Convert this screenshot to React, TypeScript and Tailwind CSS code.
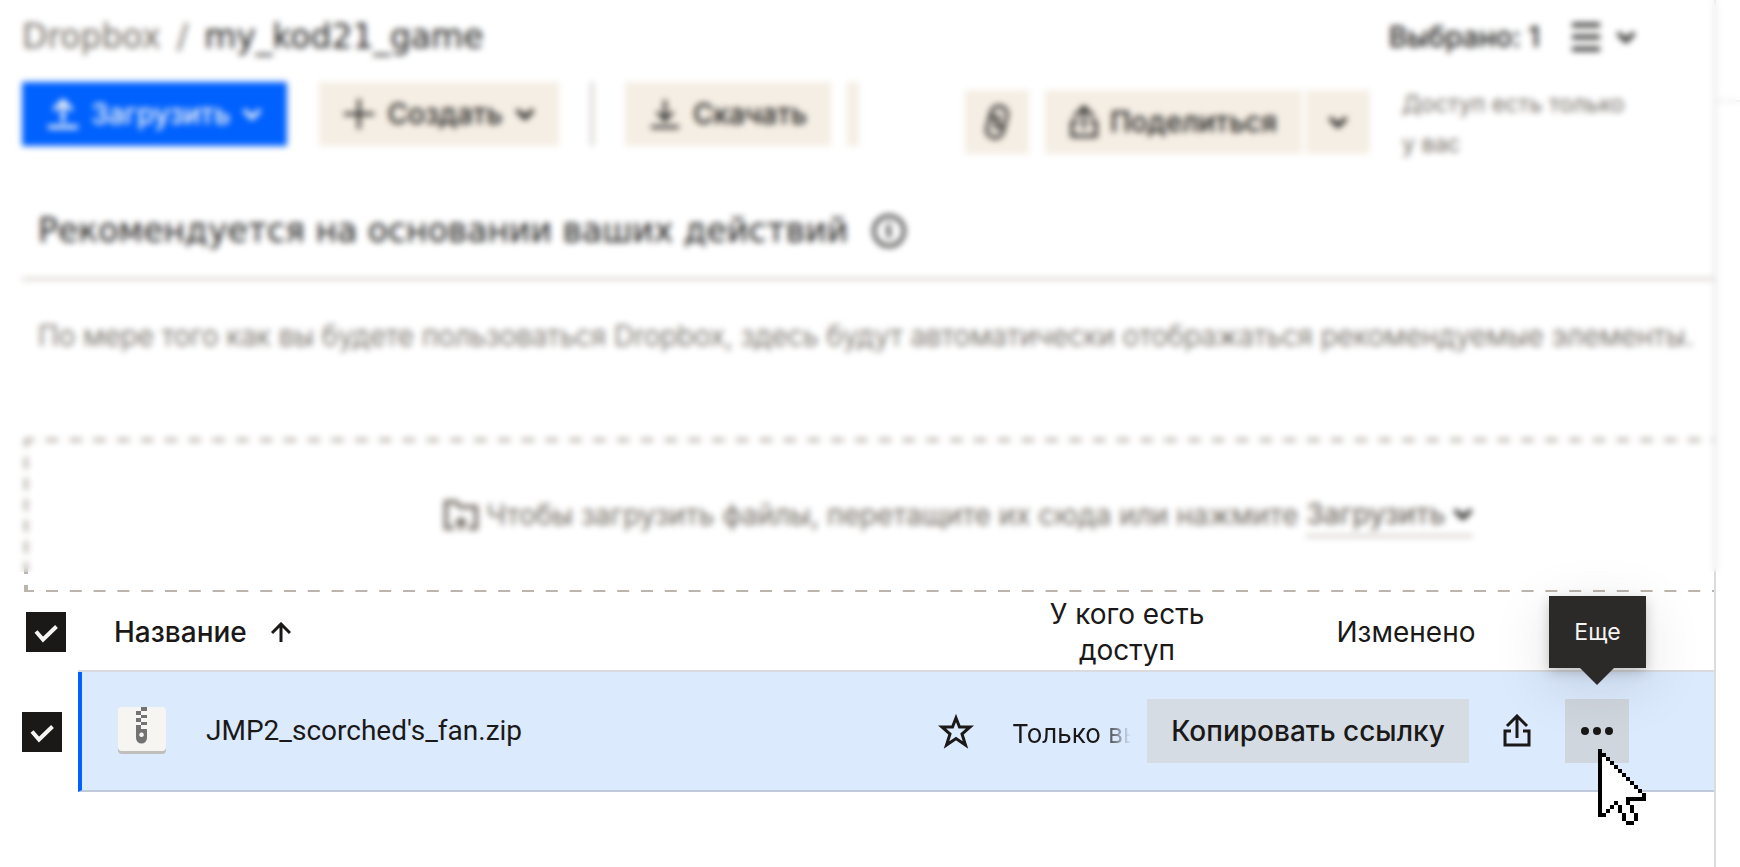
'use client';

import React from 'react';

type IconProps = { className?: string };

const ChevronIcon: React.FC<IconProps> = ({ className }) => (
  <svg viewBox="0 0 20 12" fill="none" stroke="currentColor" strokeWidth="4" className={className}>
    <path d="M2 2l8 8 8-8" />
  </svg>
);

const ShareIcon: React.FC<IconProps> = ({ className }) => (
  <svg viewBox="0 0 28 34" fill="none" stroke="currentColor" strokeWidth="3" className={className}>
    <path d="M14 24V3M4 12L14 2l10 10M8 17H2v14h24V17h-6" />
  </svg>
);

const CheckBox: React.FC<{ label: string }> = ({ label }) => (
  <label className="relative block size-10 bg-[#1a1918]">
    <input type="checkbox" defaultChecked aria-label={label} className="peer block size-10 appearance-none" />
    <svg viewBox="0 0 40 40" fill="none" stroke="#f7f5f2" strokeWidth="4" className="pointer-events-none absolute inset-0 hidden peer-checked:block">
      <path d="M10 19.5l7 8L30.500 14.500" />
    </svg>
  </label>
);

const ZipIcon: React.FC = () => (
  <svg viewBox="0 0 48 48" className="h-12 w-12">
    <rect y="3" width="48" height="44" rx="4" fill="#bfbfbc" />
    <rect width="48" height="44" rx="4" fill="#f7f5f2" />
    <g fill="#737373">
      <path d="M23 0h6v4h-6zM18 4h5v4h-5zM23 8h6v3h-6zM18 11h5v4h-5zM23 15h6v3h-6zM18 18h5v4h-5z" />
      <path fillRule="evenodd" d="M18 22h11v9a5 5 0 0 1-11 0zM23.500 25.500a2.300 2.300 0 1 0 .1 0z" />
    </g>
  </svg>
);

const Cursor: React.FC = () => (
  <svg viewBox="0 0 12 19" shapeRendering="crispEdges" className="h-[76px] w-12">
    <path fill="#fff" d="M1 1h1v1h1v1h1v1h1v1h1v1h1v1h1v1h1v1h1v1h1v2H8v2h1v4H7v-2H6v-2H5v-2H4v1H3v1H2v1H1z" />
    <path d="M0 0h1v17H0zM1 1h1v1H1zM2 2h1v1H2zM3 3h1v1H3zM4 4h1v1H4zM5 5h1v1H5zM6 6h1v1H6zM7 7h1v1H7zM8 8h1v1H8zM9 9h1v1H9zM10 10h1v1h-1zM11 11h1v2h-5v-1h4zM1 16h1v1H1zM2 15h1v1H2zM3 14h1v1H3zM4 13h1v1H4zM5 14h1v2H5zM6 16h1v2H6zM7 18h2v1H7zM7 13h1v1H7zM8 14h1v2H8zM9 16h1v2H9z" />
  </svg>
);

const App: React.FC = () => {
  return (
    <div className="relative flex min-h-screen bg-white font-[Inter,sans-serif] text-[#1a1918]">
      <main className="min-w-0 flex-1 border-r-2 border-[#dcdcdc]">
        {/* Breadcrumbs and selection */}
        <header className="flex h-[82px] items-start justify-between pt-4 pr-[78px] pl-[22px]">
          <nav className="flex gap-4 font-['DejaVu_Sans',sans-serif] text-[33px] leading-[42px]">
            <a href="#" className="text-[#736c64]">Dropbox</a>
            <span className="text-[#736c64]">/</span>
            <a href="#">my_kod21_game</a>
          </nav>
          <div className="flex items-center gap-8 text-[28px] leading-[42px] font-medium">
            <span>Выбрано: 1</span>
            <button aria-label="Вид" className="flex items-center gap-4">
              <svg viewBox="0 0 28 30" fill="none" stroke="currentColor" strokeWidth="4" className="h-[30px] w-7">
                <path d="M0 3h28M0 15h28M0 27h28" />
              </svg>
              <ChevronIcon className="h-3 w-5" />
            </button>
          </div>
        </header>

        {/* Toolbar */}
        <div className="flex items-start justify-between pr-[78px] pl-[22px] text-[28px] font-medium">
          <div className="flex h-16">
            <button className="flex w-[265px] items-center justify-center gap-3 bg-[#0061fe] text-[#f7f5f2]">
              <svg viewBox="0 0 32 32" fill="none" stroke="currentColor" strokeWidth="4" className="size-8">
                <path d="M16 24V4M7 12l9-9 9 9M1 29h30" />
              </svg>
              Загрузить
              <ChevronIcon className="h-3 w-5" />
            </button>
            <button className="ml-8 flex w-[240px] items-center justify-center gap-3 bg-[#f5eee4]">
              <svg viewBox="0 0 32 32" fill="none" stroke="currentColor" strokeWidth="3" className="size-8">
                <path d="M16 1v30M1 16h30" />
              </svg>
              Создать
              <ChevronIcon className="h-3 w-5" />
            </button>
            <div className="mx-8 w-[2px] bg-[#bbb5ae]" />
            <button className="flex w-[206px] items-center justify-center gap-3 bg-[#f5eee4]">
              <svg viewBox="0 0 32 32" fill="none" stroke="currentColor" strokeWidth="3" className="size-8">
                <path d="M16 2v20M8 14l8 8 8-8M2 29h28" />
              </svg>
              Скачать
            </button>
            <div className="ml-4 w-3 bg-[#f5eee4]" />
          </div>
          <div className="flex items-start">
            <div className="mt-2 flex h-16">
              <button aria-label="Ссылка" className="flex w-16 items-center justify-center bg-[#f5eee4]">
                <svg viewBox="0 0 28 36" fill="none" stroke="currentColor" strokeWidth="3" className="h-9 w-7">
                  <path
                    transform="rotate(15 14 18)"
                    d="M6 20V9a8 7 0 0 1 16 0v9a4 4 0 0 1-8 0v-7M22 16v11a8 7 0 0 1-16 0v-9a4 4 0 0 1 8 0v7"
                  />
                </svg>
              </button>
              <button className="ml-4 flex w-[257px] items-center justify-center gap-3 bg-[#f5eee4]">
                <ShareIcon className="h-[34px] w-7" />
                Поделиться
              </button>
              <button aria-label="Параметры" className="ml-1 flex w-16 items-center justify-center bg-[#f5eee4]">
                <ChevronIcon className="h-3 w-5" />
              </button>
            </div>
            <p className="ml-8 w-[234px] pt-[2px] text-[23px] leading-10 font-normal text-[#736c64]">Доступ есть только у вас</p>
          </div>
        </div>

        {/* Suggestions */}
        <section className="ml-[22px]">
          <div className="flex items-center gap-6 border-b-2 border-[#c4bfb8] pt-[46px] pb-[26px] pl-4">
            <h2 className="font-['DejaVu_Sans',sans-serif] text-[33px] leading-[42px]">Рекомендуется на основании ваших действий</h2>
            <svg viewBox="0 0 34 34" fill="none" stroke="currentColor" strokeWidth="3" className="size-[34px]">
              <circle cx="17" cy="17" r="15" />
              <path d="M14 15h3v9M17 9v3" />
            </svg>
          </div>
          <p className="pt-9 pb-[82px] pl-4 text-[28px] leading-10 font-light whitespace-nowrap text-[#5f5850]">
            По мере того как вы будете пользоваться Dropbox, здесь будут автоматически отображаться рекомендуемые элементы.
          </p>
        </section>

        {/* Drop zone */}
        <div className="relative ml-6 flex h-[154px] items-center justify-center overflow-hidden pl-[178px] text-[28px] text-[#736c64]">
          <svg className="absolute inset-0 h-full w-full" stroke="#bbb5ae" strokeWidth="4" fill="none">
            <path d="M0 2H10M2 0V9M0 154H10M2 147V154" />
            <path d="M22 2H1800M22 154H1800" strokeDasharray="12 11.8" />
            <path d="M2 19V140" strokeDasharray="12 9" />
          </svg>
          <svg viewBox="0 0 36 32" fill="none" stroke="currentColor" strokeWidth="4" className="mr-2 h-8 w-9">
            <path d="M11 29H3V3h10l4 5h16v21h-8M18 31V21M13 25l5-5 5 5" />
          </svg>
          <span>Чтобы загрузить файлы, перетащите их сюда или нажмите</span>
          <button className="ml-2 flex items-center gap-2 border-b-2 border-[#bbb5ae] font-medium">
            Загрузить
            <ChevronIcon className="h-3 w-5 text-[#1a1918]" />
          </button>
        </div>

        {/* Files */}
        <table className="w-full table-fixed border-separate border-spacing-0 text-[28px]">
          <colgroup>
            <col className="w-[78px]" />
            <col />
            <col className="w-[106px]" />
            <col className="w-[135px]" />
            <col className="w-[95px]" />
            <col className="w-[328px]" />
            <col className="w-[144px]" />
          </colgroup>
          <thead>
            <tr className="h-20">
              <th className="pl-[26px]">
                <CheckBox label="Выбрать все" />
              </th>
              <th className="pl-9 text-left font-medium" colSpan={2}>
                <span className="flex items-center gap-6">
                  Название
                  <svg viewBox="0 0 20 20" fill="none" stroke="currentColor" strokeWidth="3" className="size-5">
                    <path d="M10 20V2M1 11l9-9 9 9" />
                  </svg>
                </span>
              </th>
              <th className="px-8 leading-9 font-normal" colSpan={2}>У кого есть доступ</th>
              <th className="font-normal">Изменено</th>
              <th />
            </tr>
          </thead>
          <tbody>
            <tr className="h-[120px]">
              <td className="pl-[22px]">
                <CheckBox label="Выбрать файл" />
              </td>
              <td className="border-b-2 border-l-4 border-b-[#bfcadc] border-l-[#0061fe] bg-[#dceafe] pl-9 shadow-[0_-2px_0_#d9dbde]">
                <div className="flex items-center gap-10 font-[Roboto,sans-serif]">
                  <ZipIcon />
                  JMP2_scorched's_fan.zip
                </div>
              </td>
              <td className="border-b-2 border-[#bfcadc] bg-[#dceafe] pl-8 shadow-[0_-2px_0_#d9dbde]">
                <button aria-label="В избранное" className="block">
                  <svg viewBox="0 0 36 36" fill="none" stroke="currentColor" strokeWidth="3" className="size-9">
                    <path d="M18 5l3.500 9H32l-8 7 3.500 11L18 25.500 8.500 32 12 21l-8-7h10.500z" />
                  </svg>
                </button>
              </td>
              <td className="border-b-2 border-[#bfcadc] bg-[#dceafe] pt-1 shadow-[0_-2px_0_#d9dbde]">
                <div className="mr-4 text-[26px] whitespace-nowrap [mask-image:linear-gradient(to_right,black_75%,transparent)]">
                  Только вы
                </div>
              </td>
              <td className="border-b-2 border-[#bfcadc] bg-[#dceafe] shadow-[0_-2px_0_#d9dbde]" colSpan={3}>
                <div className="flex items-center">
                  <button className="h-16 w-[322px] bg-[#d6dce4] font-medium">Копировать ссылку</button>
                  <button aria-label="Поделиться" className="flex h-16 w-24 items-center justify-center">
                    <ShareIcon className="h-[34px] w-7" />
                  </button>
                  <div className="relative">
                    <button aria-label="Еще" className="flex size-16 items-center justify-center bg-[#d0d6de]">
                      <svg viewBox="0 0 32 8" fill="currentColor" className="h-2 w-8">
                        <circle cx="4" cy="4" r="4" />
                        <circle cx="16" cy="4" r="4" />
                        <circle cx="28" cy="4" r="4" />
                      </svg>
                    </button>
                    <div role="tooltip" className="absolute -left-4 bottom-full mb-[31px] flex h-[72px] w-[97px] items-center justify-center bg-[#2b2a29] text-[23px] text-[#f7f5f2] shadow-[0_4px_12px_rgba(0,0,0,0.2),0_16px_60px_rgba(0,0,0,0.12)]">
                      Еще
                      <svg viewBox="0 0 34 17" className="absolute top-full h-[17px] w-[34px]">
                        <path fill="#2b2a29" d="M0 0h34L17 17z" />
                      </svg>
                    </div>
                    <div className="pointer-events-none absolute top-[50px] left-[33px]">
                      <Cursor />
                    </div>
                  </div>
                </div>
              </td>
            </tr>
          </tbody>
        </table>
      </main>
      <aside className="w-6">
        <div className="h-[102px] border-b-2 border-[#e8e8e8]" />
      </aside>

      {/* Frosted layer over the upper part of the page */}
      <div className="pointer-events-none absolute inset-x-0 top-0 h-[572px] backdrop-blur-[3px]" />
    </div>
  );
};

export default App;
